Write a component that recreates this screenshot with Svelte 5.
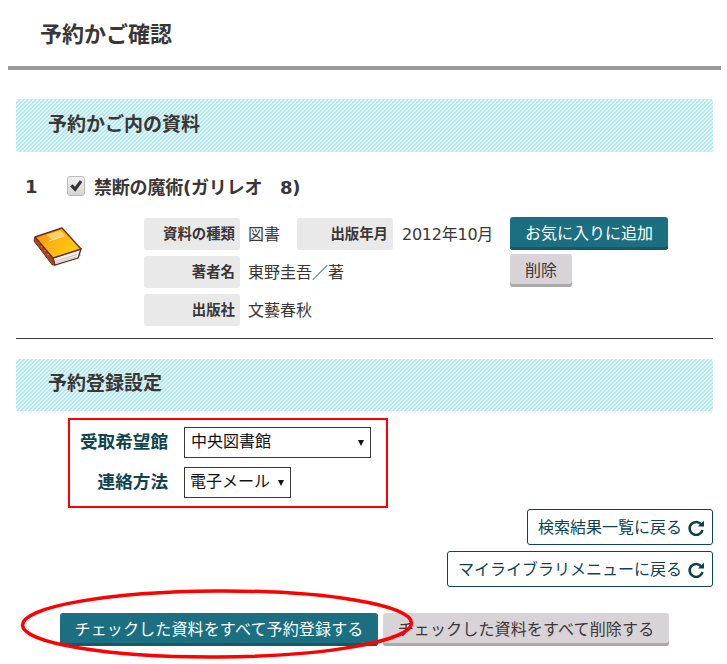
<script>
	let pickup = $state("中央図書館");
	let contact = $state("電子メール");
	const details = [
		{ label: "著者名", value: "東野圭吾／著" },
		{ label: "出版社", value: "文藝春秋" },
	];
</script>

<div class="page">
	<h1 class="title">予約かご確認</h1>

	<div class="content">
		<h2 class="band first">予約かご内の資料</h2>

		<div class="item-head">
			<span class="num">1</span>
			<span class="check">
				<svg viewBox="0 0 18 20" width="18" height="20">
					<path d="M3.200 10.500l2.300-2.300 2.500 2.600 4.800-6.600 2.500 1.800-7 9.800z" fill="#333" />
				</svg>
			</span>
			<span class="item-title">禁断の魔術(ガリレオ　8)</span>
		</div>

		<div class="item-body">
			<div class="book">
				<svg viewBox="0 0 50 42" width="50" height="42">
					<defs>
						<linearGradient id="cover" x1="0" y1="0" x2="1" y2="0.6">
							<stop offset="0" stop-color="#f68c0c" />
							<stop offset="0.6" stop-color="#ffb90f" />
							<stop offset="1" stop-color="#ffcd12" />
						</linearGradient>
					</defs>
					<path d="M3 16l17 25 28-11-1-5z" fill="#888" opacity="0.35" />
					<path d="M20 32l28-9-3 9-23 7z" fill="#f6f3ee" stroke="#5a2a1c" stroke-width="1.300" />
					<path d="M23 35l21-6.500M23 37l20-6" stroke="#a9a9a9" stroke-width="0.700" />
					<path d="M2 11l18 21 2 7-3-0.500L1 15z" fill="#a9481a" stroke="#6e2e1c" stroke-width="1" stroke-linejoin="round" />
					<path d="M5 17l2.500-1M8 21l2.500-1M11 25l2.500-1M14 29l2.500-1" stroke="#e08a3c" stroke-width="1" />
					<path d="M29 2L2 11l18 21 28-9z" fill="url(#cover)" stroke="#6e2e1c" stroke-width="1.400" stroke-linejoin="round" />
					<path d="M13.500 9L27 4.500l5 4.500-13 4.500z" fill="#fdd06a" />
					<path d="M16 15l15-5" stroke="#ffeeb0" stroke-width="1.300" />
				</svg>
			</div>

			<div class="meta">
				<div class="label">資料の種類</div>
				<div class="value">図書</div>
				<div class="label">出版年月</div>
				<div class="value year">2012年10月</div>
				{#each details as d}
					<div class="label">{d.label}</div>
					<div class="value wide">{d.value}</div>
				{/each}
			</div>

			<div class="actions">
				<button class="btn teal">お気に入りに追加</button>
				<button class="btn gray">削除</button>
			</div>
		</div>

		<h2 class="band second">予約登録設定</h2>

		<div class="settings">
			<span class="set-label">受取希望館</span>
			<div class="select-wrap long">
				<select bind:value={pickup}>
					<option>中央図書館</option>
				</select>
			</div>
			<span class="set-label">連絡方法</span>
			<div class="select-wrap short">
				<select bind:value={contact}>
					<option>電子メール</option>
				</select>
			</div>
		</div>

		<div class="returns">
			<button class="back">
				検索結果一覧に戻る
				<svg viewBox="0 0 16 16" width="16" height="16">
					<path d="M13.500 4.700A6.500 6.500 0 1 0 14.500 10" fill="none" stroke="#0c3f4a" stroke-width="2.600" />
					<path d="M10 6.500h6V0.800z" fill="#0c3f4a" />
				</svg>
			</button>
			<button class="back">
				マイライブラリメニューに戻る
				<svg viewBox="0 0 16 16" width="16" height="16">
					<path d="M13.500 4.700A6.500 6.500 0 1 0 14.500 10" fill="none" stroke="#0c3f4a" stroke-width="2.600" />
					<path d="M10 6.500h6V0.800z" fill="#0c3f4a" />
				</svg>
			</button>
		</div>

		<div class="bottom">
			<button class="btn teal wide-btn">チェックした資料をすべて予約登録する</button>
			<button class="btn gray wide-btn muted">チェックした資料をすべて削除する</button>
			<svg class="ring" viewBox="0 0 394 72" width="394" height="72">
				<ellipse cx="197" cy="36" rx="194.500" ry="33" fill="none" stroke="#f00" stroke-width="3.500" />
			</svg>
		</div>
	</div>
</div>

<style>
	:global(body) {
		margin: 0;
		background: #fff;
	}
	.page {
		width: 727px;
		height: 664px;
		overflow: hidden;
		color: #3a3636;
		font-family: "DejaVu Sans", "Noto Sans CJK JP", sans-serif;
		font-size: 16px;
	}
	.title {
		margin: 0 6px 0 8px;
		height: 66px;
		border-bottom: 4px solid #999;
		padding-left: 32px;
		font-size: 22px;
		line-height: 70px;
		font-weight: 700;
	}
	.content {
		margin: 0 14px 0 16px;
	}
	.band {
		margin: 0;
		height: 53px;
		padding-left: 32px;
		font-size: 19px;
		line-height: 50px;
		font-weight: 700;
		border-radius: 2px;
		background: repeating-linear-gradient(135deg, #b4e8ef 0 1.414px, #e2f6f8 1.414px 2.828px);
	}
	.first {
		margin-top: 29px;
	}
	.second {
		margin-top: 20px;
		height: 52px;
		line-height: 49px;
	}
	.item-head {
		display: flex;
		align-items: center;
		height: 24px;
		margin-top: 22px;
		font-weight: 700;
	}
	.num {
		width: 51px;
		padding-left: 9px;
		box-sizing: border-box;
		font-size: 18px;
	}
	.check {
		width: 18px;
		height: 20px;
		box-sizing: border-box;
		border: 1px solid #bbb;
		border-radius: 3px;
		background: linear-gradient(#f0f0f0, #d6d6d6);
		margin-right: 9px;
		display: flex;
	}
	.check svg {
		margin: -1px;
	}
	.item-title {
		font-size: 18px;
		letter-spacing: -0.2px;
	}
	.item-body {
		position: relative;
		display: flex;
		align-items: flex-start;
		margin-top: 20px;
		padding-bottom: 12px;
		border-bottom: 1px solid #3a3636;
	}
	.book {
		width: 128px;
		padding: 8px 0 0 17px;
		box-sizing: border-box;
		flex: none;
	}
	.book svg {
		display: block;
	}
	.meta {
		display: grid;
		grid-template-columns: 96px 57px 96px 117px;
		grid-auto-rows: 32px;
		row-gap: 6px;
		width: 366px;
		flex: none;
	}
	.label {
		background: #e8e9e8;
		border-radius: 3px;
		text-align: right;
		padding-right: 5px;
		font-size: 14.400px;
		font-weight: 700;
		line-height: 32px;
	}
	.value {
		padding-left: 8px;
		line-height: 33px;
		white-space: nowrap;
	}
	.year {
		padding-left: 9px;
		letter-spacing: -0.250px;
	}
	.wide {
		grid-column: 2 / 5;
	}
	.actions {
		display: flex;
		flex-direction: column;
		align-items: flex-start;
		gap: 4px;
		margin-top: -1px;
	}
	.btn {
		height: 33px;
		padding: 0 15px 3px;
		border: none;
		border-radius: 3px;
		font: inherit;
		white-space: nowrap;
	}
	.teal {
		background: #1b6f80;
		color: #fff;
		box-shadow: inset 0 -3px 0 #135a66;
	}
	.gray {
		background: #d7d3d7;
		color: #3a3636;
		box-shadow: inset 0 -3px 0 #aaa;
	}
	.settings {
		display: grid;
		grid-template-columns: 98px auto;
		grid-auto-rows: 31px;
		column-gap: 16px;
		row-gap: 9px;
		justify-content: start;
		box-sizing: border-box;
		width: 320px;
		height: 90px;
		margin: 7px 0 0 52px;
		padding: 7px 0 0;
		border: 2px solid #f00;
	}
	.set-label {
		text-align: right;
		font-size: 17.600px;
		font-weight: 700;
		line-height: 30px;
		color: #0e4450;
	}
	.select-wrap {
		position: relative;
		box-sizing: border-box;
		height: 31px;
		border: 1px solid #3a3636;
		background: #fff;
	}
	.select-wrap::after {
		content: "";
		position: absolute;
		right: 6px;
		top: 12px;
		border-style: solid;
		border-width: 6px 3.500px 0;
		border-color: #111 transparent transparent;
		pointer-events: none;
	}
	.long {
		width: 187px;
	}
	.short {
		width: 107px;
	}
	select {
		appearance: none;
		display: block;
		width: 100%;
		height: 100%;
		border: none;
		outline: none;
		background: transparent;
		padding: 0 0 2px 6px;
		font: inherit;
		color: #111;
	}
	.short select {
		padding-left: 5px;
	}
	.returns {
		display: flex;
		flex-direction: column;
		align-items: flex-end;
		gap: 6px;
		margin-top: 1px;
	}
	.back {
		display: flex;
		align-items: center;
		gap: 6px;
		height: 36px;
		box-sizing: border-box;
		padding: 0 8px 2px 10px;
		border: 1px solid #0e4450;
		border-radius: 3px;
		background: #fff;
		color: #0e4450;
		font: inherit;
		white-space: nowrap;
	}
	.back svg {
		margin-top: 3px;
	}
	.bottom {
		position: relative;
		display: flex;
		gap: 5px;
		margin: 26px 0 0 44px;
	}
	.wide-btn {
		padding: 0 0 3px;
		letter-spacing: 0.150px;
	}
	.bottom .teal {
		width: 318px;
	}
	.bottom .gray {
		width: 286px;
	}
	.ring {
		position: absolute;
		left: -40px;
		top: -25px;
		pointer-events: none;
		transform: rotate(-0.3deg);
	}
</style>
